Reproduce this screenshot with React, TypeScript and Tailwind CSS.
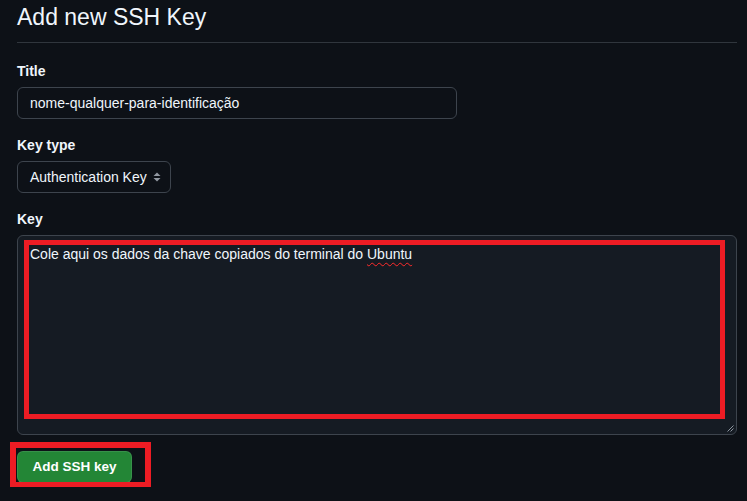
import React from 'react';

const font = { fontFamily: '"Liberation Sans", Arial, sans-serif' };

const SelectArrows: React.FC = () => (
  <svg width="8" height="10" viewBox="0 0 8 10" className="shrink-0">
    <path d="M4 0.5 L7.5 4 L0.5 4 Z" fill="#9198a1" />
    <path d="M4 9.5 L7.5 6 L0.5 6 Z" fill="#9198a1" />
  </svg>
);

const App: React.FC = () => {
  return (
    <div className="relative min-h-screen bg-[#0d1117] text-[#f0f6fc] pl-[17px] pr-[10px]" style={font}>
      {/* Heading */}
      <h1 className="pt-[2px] pb-[10px] text-[23px] leading-[30px] font-normal border-b border-[#30363d]">
        Add new SSH Key
      </h1>

      <form className="pt-[18px]">
        {/* Title */}
        <div className="mb-4">
          <label className="block text-[14px] leading-5 font-bold mb-[6px]">Title</label>
          <div className="w-[440px] h-[32px] flex items-center px-3 rounded-md border border-[#3d444d] bg-[#0d1117] text-[14px]">
            nome-qualquer-para-identificação
          </div>
        </div>

        {/* Key type */}
        <div className="mb-4">
          <label className="block text-[14px] leading-5 font-bold mb-[6px]">Key type</label>
          <div className="w-[154px] h-[32px] flex items-center justify-between pl-3 pr-[9px] rounded-md border border-[#3d444d] bg-[#0d1117] text-[14px] whitespace-nowrap">
            <span>Authentication Key</span>
            <SelectArrows />
          </div>
        </div>

        {/* Key */}
        <div className="mb-4">
          <label className="block text-[14px] leading-5 font-bold mb-[6px]">Key</label>
          <div className="relative h-[200px] px-3 pt-2 rounded-md border border-[#3d444d] bg-[#151b23] text-[14px] leading-5">
            Cole aqui os dados da chave copiados do terminal do{' '}
            <span className="underline decoration-wavy decoration-[#ff2b2b] decoration-1 underline-offset-[3px]">Ubuntu</span>
            <svg width="7" height="7" viewBox="0 0 7 7" className="absolute right-[2px] bottom-[2px]">
              <path d="M6.5 0.5 L0.5 6.5 M6.5 3.5 L3.5 6.5" stroke="#8b949e" strokeWidth="1" />
            </svg>
          </div>
        </div>

        <button
          type="button"
          className="w-[115px] h-[32px] rounded-md border border-[#f0f6fc1a] bg-[#238636] text-white text-[13.5px] font-bold"
        >
          Add SSH key
        </button>
      </form>

      {/* Annotations */}
      <div className="absolute left-[24px] top-[240px] w-[701px] h-[179px] border-[5px] border-[#ed1c24] pointer-events-none" />
      <div className="absolute left-[10px] top-[442px] w-[141px] h-[45px] border-[6px] border-b-[5px] border-[#ed1c24] pointer-events-none" />
    </div>
  );
};

export default App;
